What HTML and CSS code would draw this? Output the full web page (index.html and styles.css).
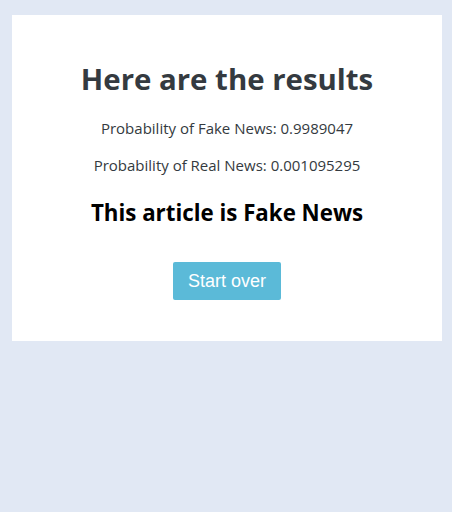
FILE: index.html
```html
<!DOCTYPE html>
<html>
<head>
<meta charset="utf-8">
<link rel="stylesheet" href="styles.css">
</head>
<body>
<div class="card">
  <h1 class="title">Here are the results</h1>
  <p class="prob">Probability of Fake News: 0.9989047</p>
  <p class="prob">Probability of Real News: 0.001095295</p>
  <h3 class="verdict">This article is Fake News</h3>
  <button class="btn">Start over</button>
</div>
</body>
</html>
```
FILE: styles.css
```css
html, body {
  margin: 0;
  padding: 0;
  background: #e1e8f4;
}
body {
  padding: 15px 10px 0 12px;
  font-family: "Open Sans", "Noto Sans", sans-serif;
}
.card {
  background: #ffffff;
  height: 326px;
  box-sizing: border-box;
  display: flex;
  flex-direction: column;
  align-items: center;
  padding-top: 45px;
}
.title {
  margin: 0;
  font-size: 29.4px;
  line-height: 38px;
  font-weight: 700;
  color: #343a40;
}
.prob {
  margin: 0;
  font-size: 15px;
  line-height: 20px;
  color: #343a40;
}
.title + .prob {
  margin-top: 20px;
}
.prob + .prob {
  margin-top: 17px;
}
.verdict {
  margin: 23px 0 0;
  font-size: 22.3px;
  line-height: 30px;
  font-weight: 700;
  color: #000;
}
.btn {
  margin-top: 34px;
  width: 108px;
  height: 38px;
  background: #5bbad8;
  border: none;
  border-radius: 2px;
  color: #fff;
  font-family: "Liberation Sans", Arial, sans-serif;
  font-size: 18px;
  padding: 0;
}
```
